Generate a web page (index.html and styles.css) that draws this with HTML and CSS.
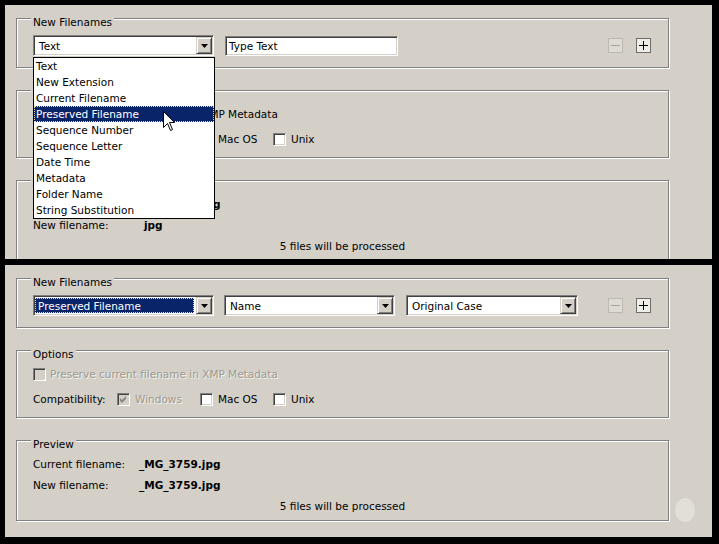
FILE: index.html
```html
<!DOCTYPE html>
<html lang="en">
  <head>
    <meta charset="UTF-8" />
    <title>Batch Rename</title>
    <link rel="stylesheet" href="styles.css">
  </head>
  <body>
    <div class="screen">
      <!-- 上: 下拉菜单展开 -->
      <div class="pane pane-top">
        <div class="group group-names">
          <span class="legend">New Filenames</span>
          <div class="combo">
            <div class="select sel-1">
              <span class="select-text">Text</span>
              <span class="drop-btn"></span>
            </div>
            <ul class="drop-list">
              <li>Text</li>
              <li>New Extension</li>
              <li>Current Filename</li>
              <li class="active">Preserved Filename</li>
              <li>Sequence Number</li>
              <li>Sequence Letter</li>
              <li>Date Time</li>
              <li>Metadata</li>
              <li>Folder Name</li>
              <li>String Substitution</li>
            </ul>
            <svg class="cursor" width="12" height="20" viewBox="0 0 12 20">
              <path d="M0.5 0.5 V16.5 L4.5 12.5 L7.5 19.5 L9.5 18.5 L6.5 11.5 H11.5 Z" fill="#fff" stroke="#000" />
            </svg>
          </div>
          <div class="text-field">Type Text</div>
          <span class="pm-btn is-disabled">
            <svg width="9" height="9" viewBox="0 0 9 9"><path d="M0 4.5 H9" stroke="#a8a49c" /></svg>
          </span>
          <span class="pm-btn">
            <svg width="9" height="9" viewBox="0 0 9 9"><path d="M0 4.5 H9 M4.5 0 V9" stroke="#000" /></svg>
          </span>
        </div>

        <div class="group group-options">
          <span class="legend">Options</span>
          <label class="check-row"><span class="check"></span>Preserve current filename in XMP Metadata</label>
          <div class="compat-row">
            <span class="compat-label">Compatibility:</span>
            <label class="opt opt-win"><span class="check"></span>Windows</label>
            <label class="opt opt-mac"><span class="check"></span>Mac OS</label>
            <label class="opt"><span class="check"></span>Unix</label>
          </div>
        </div>

        <div class="group group-preview">
          <span class="legend">Preview</span>
          <div class="preview-row"><span class="preview-label">Current filename:</span><b>_MG_3759.jpg</b></div>
          <div class="preview-row"><span class="preview-label">New filename:</span><b class="ext-only">jpg</b></div>
          <div class="preview-note">5 files will be processed</div>
        </div>
      </div>

      <!-- 下: 选中 Preserved Filename 之后 -->
      <div class="pane pane-bottom">
        <div class="group group-names">
          <span class="legend">New Filenames</span>
          <div class="select sel-1">
            <span class="select-text is-selected">Preserved Filename</span>
            <span class="drop-btn"></span>
          </div>
          <div class="select sel-2">
            <span class="select-text">Name</span>
            <span class="drop-btn"></span>
          </div>
          <div class="select sel-3">
            <span class="select-text">Original Case</span>
            <span class="drop-btn"></span>
          </div>
          <span class="pm-btn is-disabled">
            <svg width="9" height="9" viewBox="0 0 9 9"><path d="M0 4.5 H9" stroke="#a8a49c" /></svg>
          </span>
          <span class="pm-btn">
            <svg width="9" height="9" viewBox="0 0 9 9"><path d="M0 4.5 H9 M4.5 0 V9" stroke="#000" /></svg>
          </span>
        </div>

        <div class="group group-options">
          <span class="legend">Options</span>
          <label class="check-row is-disabled"><span class="check"></span>Preserve current filename in XMP Metadata</label>
          <div class="compat-row">
            <span class="compat-label">Compatibility:</span>
            <label class="opt opt-win is-disabled">
              <span class="check">
                <svg width="7" height="7" viewBox="0 0 7 7"><path d="M0 2 L2 4 L6 0 V3 L2 7 L0 5 Z" fill="#8a877f" /></svg>
              </span>Windows
            </label>
            <label class="opt opt-mac"><span class="check"></span>Mac OS</label>
            <label class="opt"><span class="check"></span>Unix</label>
          </div>
        </div>

        <div class="group group-preview">
          <span class="legend">Preview</span>
          <div class="preview-row"><span class="preview-label">Current filename:</span><b>_MG_3759.jpg</b></div>
          <div class="preview-row"><span class="preview-label">New filename:</span><b>_MG_3759.jpg</b></div>
          <div class="preview-note">5 files will be processed</div>
        </div>

        <span class="blob"></span>
      </div>
    </div>
  </body>
</html>
```

FILE: styles.css
```css
body {
  margin: 0;
  background: #000;
  font-family: "DejaVu Sans", sans-serif;
  font-size: 10.5px;
  color: #000;
}

.screen {
  display: flex;
  flex-direction: column;
  gap: 6px;
  padding: 5px 0 0 5px;
}

.pane {
  position: relative;
  width: 707px;
  box-sizing: border-box;
  padding: 13px 0 0 11px;
  background: #d4d0c8;
  overflow: hidden;
}
.pane-top {
  height: 254px;
}
.pane-bottom {
  height: 272px;
}

/* 分组框 (etched) */
.group {
  position: relative;
  width: 653px;
  box-sizing: border-box;
  border: 1px solid #808080;
  box-shadow: inset 1px 1px 0 #fff, 1px 1px 0 #fff;
  margin-bottom: 22px;
}
.legend {
  position: absolute;
  top: -4px;
  left: 14px;
  padding: 0 2px;
  line-height: 14px;
  background: #d4d0c8;
}

.group-names {
  display: flex;
  align-items: center;
  padding: 16px 17px 11px 16px;
}

/* 下拉框 */
.combo {
  position: relative;
}
.select {
  display: flex;
  height: 21px;
  box-sizing: border-box;
  padding: 1px;
  background: #fff;
  border: 1px solid;
  border-color: #808080 #fff #fff #808080;
  box-shadow: inset 1px 1px 0 #404040, inset -1px -1px 0 #d4d0c8;
}
.sel-1 {
  width: 181px;
}
.sel-2 {
  width: 171px;
  margin-left: 10px;
}
.sel-3 {
  width: 172px;
  margin-left: 11px;
}
.select-text {
  flex: 1;
  padding-left: 4px;
  line-height: 18px;
  white-space: nowrap;
  overflow: hidden;
}
.select-text.is-selected {
  margin: 1px 2px 1px 0;
  padding-left: 3px;
  line-height: 16px;
  background: #0a246a;
  color: #fff;
  outline: 1px dotted #e8df9a;
  outline-offset: -1px;
}
.drop-btn {
  position: relative;
  flex: none;
  width: 16px;
  height: 17px;
  box-sizing: border-box;
  background: #d4d0c8;
  border: 1px solid;
  border-color: #d4d0c8 #404040 #404040 #d4d0c8;
  box-shadow: inset 1px 1px 0 #fff, inset -1px -1px 0 #808080;
}
.drop-btn::after {
  content: "";
  position: absolute;
  left: 4px;
  top: 6px;
  width: 7px;
  height: 4px;
  background: #000;
  clip-path: polygon(0 0, 100% 0, 50% 100%);
}

.drop-list {
  position: absolute;
  z-index: 10;
  top: 22px;
  left: 0;
  width: 182px;
  box-sizing: border-box;
  margin: 0;
  padding: 0;
  list-style: none;
  background: #fff;
  border: 1px solid #000;
}
.drop-list li {
  height: 16px;
  padding-left: 2px;
  line-height: 17px;
  white-space: nowrap;
}
.drop-list li.active {
  background: #0a246a;
  color: #fff;
  outline: 1px dotted #e8df9a;
  outline-offset: -1px;
}
.cursor {
  position: absolute;
  z-index: 11;
  left: 130px;
  top: 76px;
}

.text-field {
  width: 173px;
  height: 20px;
  margin-left: 11px;
  box-sizing: border-box;
  padding-left: 3px;
  line-height: 18px;
  background: #fff;
  border: 1px solid;
  border-color: #808080 #fff #fff #808080;
  box-shadow: inset 1px 1px 0 #404040, inset -1px -1px 0 #d4d0c8;
}

/* 加减按钮 */
.pm-btn {
  display: flex;
  align-items: center;
  justify-content: center;
  width: 15px;
  height: 15px;
  box-sizing: border-box;
  margin-left: 13px;
  background: #efede8;
  border: 1px solid #6e6c68;
}
.pm-btn.is-disabled {
  margin-left: auto;
  background: #dedbd4;
  border-color: #bdb9b1;
}

/* 复选框 */
.check {
  display: inline-flex;
  align-items: center;
  justify-content: center;
  flex: none;
  width: 13px;
  height: 13px;
  box-sizing: border-box;
  background: #fff;
  border: 1px solid;
  border-color: #808080 #fff #fff #808080;
  box-shadow: inset 1px 1px 0 #404040, inset -1px -1px 0 #d4d0c8;
}
.is-disabled .check {
  background: #d4d0c8;
}
.is-disabled {
  color: #9c9991;
  text-shadow: 1px 1px 0 #f2f1ee;
}

.group-options {
  display: flex;
  flex-direction: column;
  gap: 9px;
  padding: 15px 16px 10px 16px;
}
.check-row,
.compat-row,
.opt {
  display: flex;
  align-items: center;
  height: 16px;
  gap: 4px;
}
.compat-label {
  width: 80px;
}
.opt {
  gap: 5px;
}
.opt-win {
  width: 79px;
}
.opt-mac {
  width: 69px;
}

.group-preview {
  padding: 15px 16px 6px 16px;
}
.preview-row {
  display: flex;
  height: 16px;
  line-height: 17px;
  margin-bottom: 5px;
}
.preview-label {
  width: 106px;
}
.ext-only {
  padding-left: 5px;
}
.preview-note {
  height: 16px;
  line-height: 17px;
  text-align: center;
}

.blob {
  position: absolute;
  left: 670px;
  top: 233px;
  width: 20px;
  height: 24px;
  border-radius: 50%;
  background: #e2dfd9;
}
```
